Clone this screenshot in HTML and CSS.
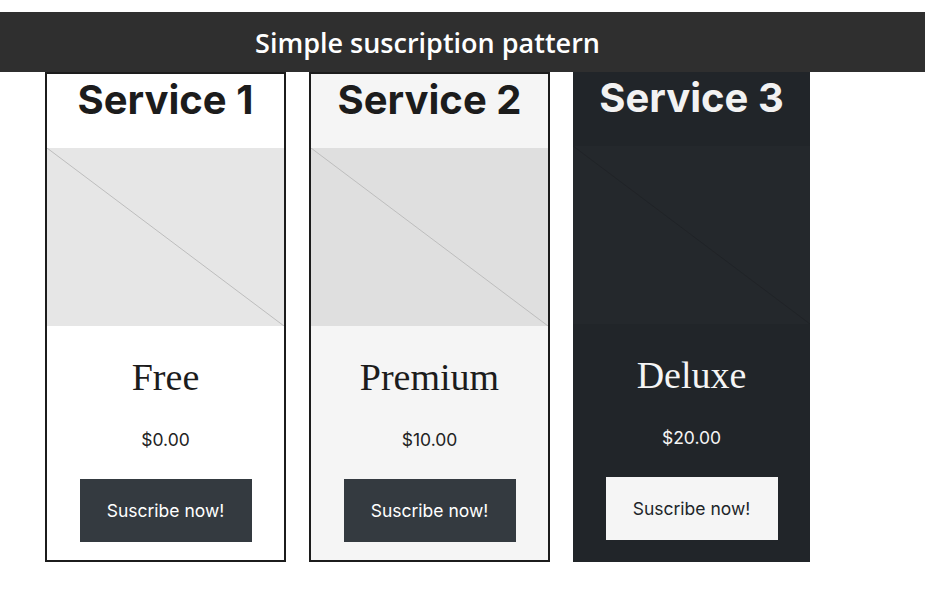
FILE: index.html
```html
<!DOCTYPE html>
<html lang="en">
<head>
    <meta charset="UTF-8">
    <meta name="viewport" content="width=device-width, initial-scale=1.0">
    <title>Simple suscription pattern</title>
    <link rel="stylesheet" href="styles.css">
</head>
<body>
    <header class="top-bar">
        <h2>Simple suscription pattern</h2>
    </header>

    <div class="plans">
        <div class="plan plan-free">
            <h1 class="plan-title">Service 1</h1>
            <div class="plan-img">
                <svg viewBox="0 0 100 100" preserveAspectRatio="none">
                    <line x1="0" y1="0" x2="100" y2="100" vector-effect="non-scaling-stroke"/>
                </svg>
            </div>
            <h3 class="plan-name">Free</h3>
            <p class="plan-price">$0.00</p>
            <button class="plan-btn">Suscribe now!</button>
        </div>

        <div class="plan plan-premium">
            <h1 class="plan-title">Service 2</h1>
            <div class="plan-img">
                <svg viewBox="0 0 100 100" preserveAspectRatio="none">
                    <line x1="0" y1="0" x2="100" y2="100" vector-effect="non-scaling-stroke"/>
                </svg>
            </div>
            <h3 class="plan-name">Premium</h3>
            <p class="plan-price">$10.00</p>
            <button class="plan-btn">Suscribe now!</button>
        </div>

        <div class="plan plan-deluxe">
            <h1 class="plan-title">Service 3</h1>
            <div class="plan-img">
                <svg viewBox="0 0 100 100" preserveAspectRatio="none">
                    <line x1="0" y1="0" x2="100" y2="100" vector-effect="non-scaling-stroke"/>
                </svg>
            </div>
            <h3 class="plan-name">Deluxe</h3>
            <p class="plan-price">$20.00</p>
            <button class="plan-btn">Suscribe now!</button>
        </div>
    </div>
</body>
</html>
```

FILE: styles.css
```css
* {
    margin: 0;
    padding: 0;
    box-sizing: border-box;
}

body {
    background: #fff;
    font-family: 'Inter', sans-serif;
    color: #212529;
}

.top-bar {
    margin-top: 12px;
    height: 60px;
    background: #2f2f2f;
    display: flex;
    align-items: center;
    justify-content: center;
    padding-right: 70px; /* title sits a bit left of center */
}

.top-bar h2 {
    color: #fff;
    font-family: 'Open Sans', sans-serif;
    font-weight: 600;
    font-size: 27px;
}

.plans {
    display: flex;
    gap: 23px;
    padding-left: 45px;
}

.plan {
    width: 241px;
    height: 490px;
    border: 2px solid #1c1c1c;
    display: flex;
    flex-direction: column;
    align-items: center;
    text-align: center;
}

.plan-premium {
    background: #f5f5f5;
}

.plan-deluxe {
    width: 237px;
    border: none;
    background: #212529;
    color: #f5f5f5;
}

.plan-title {
    height: 74px;
    font-family: 'Inter', sans-serif;
    font-size: 40px;
    font-weight: 700;
    color: #1c1c1c;
    line-height: 52px;
}

.plan-deluxe .plan-title {
    color: #f2f2f2;
}

.plan-img {
    width: 100%;
    height: 178px;
    background: #e6e6e6;
}

.plan-premium .plan-img {
    background: #dfdfdf;
}

.plan-deluxe .plan-img {
    background: #24282c;
}

.plan-img svg {
    display: block;
    width: 100%;
    height: 100%;
}

.plan-img line {
    stroke: #bdbdbd;
    stroke-width: 1;
}

.plan-deluxe .plan-img line {
    stroke: #202327;
}

.plan-name {
    margin-top: 26px;
    font-family: 'Liberation Serif', 'Times New Roman', serif;
    font-size: 38px;
    font-weight: normal;
    color: #1c1c1c;
    line-height: 50px;
}

.plan-deluxe .plan-name {
    color: #f5f5f5;
}

.plan-price {
    margin-top: 26px;
    font-size: 17.5px;
    line-height: 24px;
    color: #222;
}

.plan-deluxe .plan-price {
    color: #f5f5f5;
}

.plan-btn {
    margin-top: 27px;
    width: 172px;
    height: 63px;
    border: none;
    background: #343a40;
    color: #fff;
    font-family: 'Inter', sans-serif;
    font-size: 17.5px;
    cursor: pointer;
}

.plan-deluxe .plan-btn {
    background: #f5f5f5;
    color: #212529;
}
```
